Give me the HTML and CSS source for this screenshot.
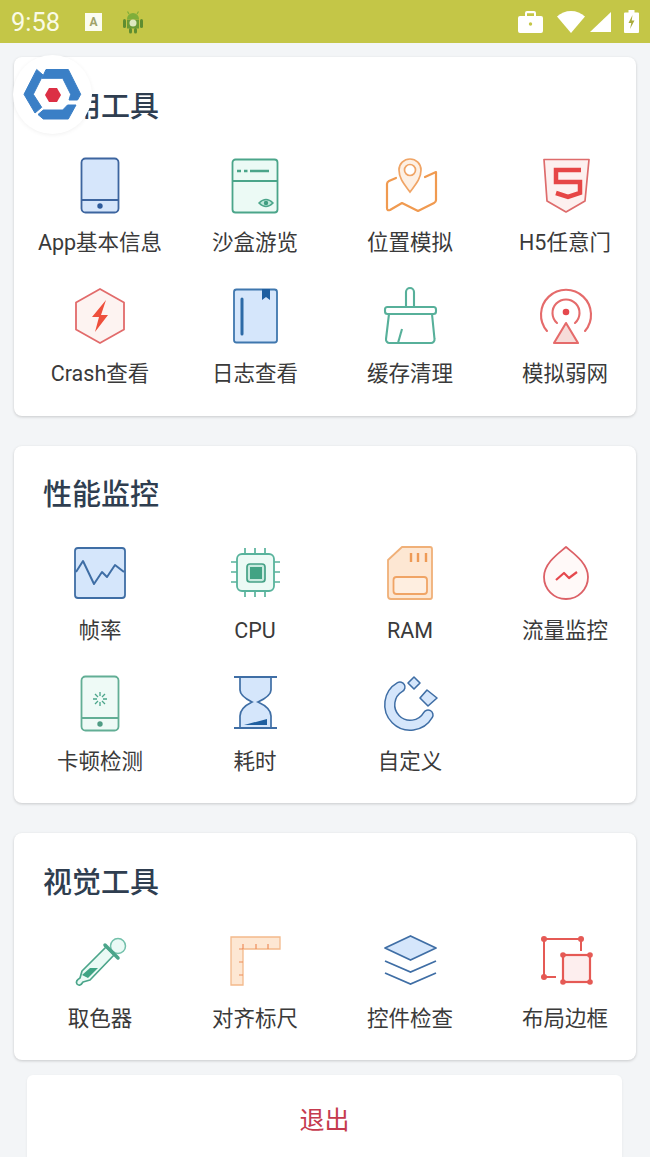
FILE: index.html
```html
<!DOCTYPE html>
<html lang="zh-CN">
  <head>
    <meta charset="UTF-8" />
    <meta name="viewport" content="width=device-width, initial-scale=1.0" />
    <title>工具面板</title>
    <link rel="stylesheet" href="styles.css">
  </head>
  <body>
    <header class="status-bar">
      <span class="time">9:58</span>
      <span class="note-a">A</span>
      <svg class="note-droid" viewBox="0 0 20 24">
        <path d="M4 9a6 6 0 0 1 12 0z" fill="#7fae3a"/>
        <path d="M6 4 4.500 1.500M14 4l1.500-2.500" stroke="#7fae3a" stroke-width="1.200"/>
        <rect x="4" y="9.500" width="12" height="9" fill="#6b9a35"/>
        <rect x="0" y="9" width="3" height="9" rx="1.500" fill="#5f8d30"/>
        <rect x="17" y="9" width="3" height="9" rx="1.500" fill="#5f8d30"/>
        <rect x="6" y="18" width="3" height="5.500" rx="1.500" fill="#5f8d30"/>
        <rect x="11" y="18" width="3" height="5.500" rx="1.500" fill="#5f8d30"/>
        <circle cx="10" cy="13" r="3.500" fill="#dfe9c0"/>
      </svg>
      <span class="status-right">
        <svg class="st-case" viewBox="0 0 25 22">
          <path d="M9 0h7a2 2 0 0 1 2 2v3h5a2 2 0 0 1 2 2v13a2 2 0 0 1-2 2H2a2 2 0 0 1-2-2V7a2 2 0 0 1 2-2h5V2a2 2 0 0 1 2-2zm0 2.200V5h7V2.200z" fill="#fff" fill-rule="evenodd"/>
          <circle cx="12.500" cy="13" r="1.700" fill="#c4c647"/>
        </svg>
        <svg class="st-wifi" viewBox="0 0 28 22"><path d="M14 22 0 5.500C3.800 2 8.700 0 14 0s10.200 2 14 5.500z" fill="#fff"/></svg>
        <svg class="st-signal" viewBox="0 0 21 20"><path d="M21 0v20H0z" fill="#fff"/></svg>
        <svg class="st-batt" viewBox="0 0 15 23">
          <path d="M4.500 0h6v2.500H14a1 1 0 0 1 1 1V22a1 1 0 0 1-1 1H1a1 1 0 0 1-1-1V3.500a1 1 0 0 1 1-1h3.500z" fill="#fff"/>
          <path d="M8.500 5 4.500 13h2.800L6 19l4.500-8.500H7.700z" fill="#a9ab3c"/>
        </svg>
      </span>
    </header>

    <main class="page">
      <div class="logo-badge">
        <svg viewBox="0 0 79 79">
          <g fill="#3a7fc6" stroke="#3a7fc6" stroke-width="1" stroke-linejoin="round">
            <path d="M23.700 14.500 11 39.300 22 58 28.700 52.300 20.300 39.300 30 20z"/>
            <path d="M33 14.500H55.300L67.700 39.300 64.500 45H56L57.700 39.300 49.700 23.300H29z"/>
            <path d="M25 59.500 30.300 64H55.300L63 50H54.500L49.700 55H30.300z"/>
          </g>
          <path d="M32 40 36 33H44L48 40 44 47H36z" fill="#dc2f45"/>
        </svg>
      </div>

      <section class="card">
        <h2 class="card-title">常用工具</h2>
        <div class="tools">
          <div class="tool">
            <svg class="tool-icon" viewBox="0 0 60 60">
              <rect x="11.500" y="3.500" width="37" height="54" rx="4" fill="#d6e6fb" stroke="#3d659f" stroke-width="1.800"/>
              <path d="M11.500 45h37" stroke="#3d659f" stroke-width="1.800"/>
              <circle cx="30" cy="51" r="2.700" fill="#2f5c9c"/>
            </svg>
            <span class="tool-name">App基本信息</span>
          </div>
          <div class="tool">
            <svg class="tool-icon" viewBox="0 0 60 60">
              <rect x="7.500" y="4.500" width="45" height="53" rx="3" fill="#ecfaf5" stroke="#4ba58a" stroke-width="1.800"/>
              <path d="M7.500 26h45" stroke="#4ba58a" stroke-width="1.800"/>
              <path d="M12 16h4M19 16h3.500M25 16h19" stroke="#4ba58a" stroke-width="2.400"/>
              <path d="M34 48q7-7 14 0-7 7-14 0z" fill="#bfe8da" stroke="#4ba58a" stroke-width="1.500"/>
              <circle cx="41" cy="48" r="2.200" fill="#3f9d80"/>
            </svg>
            <span class="tool-name">沙盒游览</span>
          </div>
          <div class="tool">
            <svg class="tool-icon" viewBox="0 0 60 60">
              <path d="M16 23 9 26Q7 27 7 29V53Q7 56 10 55L22 48 38 56 54 48Q56 47 56 45V17L45 22" fill="none" stroke="#f09a50" stroke-width="2.200" stroke-linejoin="round" stroke-linecap="round"/>
              <path d="M30 37C25 30 19 24 19 15a11 11 0 0 1 22 0C41 24 35 30 30 37z" fill="#fdf0e4" stroke="#f0a465" stroke-width="1.700"/>
              <circle cx="30" cy="15" r="5.500" fill="#fff" stroke="#f0a465" stroke-width="1.700"/>
            </svg>
            <span class="tool-name">位置模拟</span>
          </div>
          <div class="tool">
            <svg class="tool-icon" viewBox="0 0 60 60">
              <path d="M9 4.500H54L50 46 31 57 12 46z" fill="#fdf0ef" stroke="#de6c6c" stroke-width="1.700" stroke-linejoin="round"/>
              <path d="M46 15H21V27H45V38L33 42 21 38" fill="none" stroke="#e64646" stroke-width="4.500"/>
            </svg>
            <span class="tool-name">H5任意门</span>
          </div>
          <div class="tool">
            <svg class="tool-icon" viewBox="0 0 60 60">
              <path d="M30 3 54 16.500V43.500L30 57 6 43.500V16.500z" fill="#fdf3f1" stroke="#e26b6b" stroke-width="1.800" stroke-linejoin="round"/>
              <path d="M36 14 22 31H29L25 46 38 29H31z" fill="#ee4f3c"/>
            </svg>
            <span class="tool-name">Crash查看</span>
          </div>
          <div class="tool">
            <svg class="tool-icon" viewBox="0 0 60 60">
              <rect x="9" y="3.500" width="43" height="53" rx="2.500" fill="#d5e6fb" stroke="#3f77ae" stroke-width="1.800"/>
              <path d="M37 3h8V14L41 11 37 14z" fill="#1f5fa0"/>
              <path d="M17 13V48" stroke="#2d6aa6" stroke-width="3" stroke-linecap="round"/>
            </svg>
            <span class="tool-name">日志查看</span>
          </div>
          <div class="tool">
            <svg class="tool-icon" viewBox="0 0 60 60">
              <g fill="none" stroke="#57b09a" stroke-width="2.100" stroke-linejoin="round">
                <path d="M26 21V6a4 4 0 0 1 8 0V21"/>
                <rect x="5" y="21" width="51" height="7" rx="2.500"/>
                <path d="M9 28 6 53a3.500 3.500 0 0 0 3.500 4H51a3.500 3.500 0 0 0 3.500-4L52 28"/>
                <path d="M22 43 18 57"/>
              </g>
            </svg>
            <span class="tool-name">缓存清理</span>
          </div>
          <div class="tool">
            <svg class="tool-icon" viewBox="0 0 60 60">
              <g fill="none" stroke="#e56b6b" stroke-width="2.100" stroke-linecap="round">
                <path d="M12 45A25 25 0 1 1 50 45"/>
                <path d="M22 37A13.500 13.500 0 1 1 40 37"/>
              </g>
              <circle cx="31" cy="26" r="3.300" fill="#e5484d"/>
              <path d="M31 37 43 57H19z" fill="#f6dcd9" stroke="#e56b6b" stroke-width="2.100" stroke-linejoin="round"/>
            </svg>
            <span class="tool-name">模拟弱网</span>
          </div>
        </div>
      </section>

      <section class="card">
        <h2 class="card-title">性能监控</h2>
        <div class="tools">
          <div class="tool">
            <svg class="tool-icon" viewBox="0 0 60 60">
              <rect x="5" y="5" width="50" height="50" rx="3" fill="#d5e6fb" stroke="#3f6ea5" stroke-width="1.800"/>
              <path d="M6 29 13 18 24 41 32 29 37 34 45 22 54 29" fill="none" stroke="#3f6ea5" stroke-width="2" stroke-linejoin="round"/>
            </svg>
            <span class="tool-name">帧率</span>
          </div>
          <div class="tool">
            <svg class="tool-icon" viewBox="0 0 60 60">
              <path d="M20 5v6M30 5v6M40 5v6M20 48v6M30 48v6M40 48v6M6 19h6M6 29h6M6 39h6M49 19h6M49 29h6M49 39h6" stroke="#58b39c" stroke-width="1.700"/>
              <rect x="12" y="11" width="37" height="37" rx="5" fill="#ecfaf5" stroke="#58b39c" stroke-width="1.800"/>
              <rect x="22" y="21" width="18" height="18" rx="3" fill="#c9eadf" stroke="#45a186" stroke-width="1.700"/>
              <rect x="25" y="24" width="12" height="12" fill="#42a384"/>
            </svg>
            <span class="tool-name">CPU</span>
          </div>
          <div class="tool">
            <svg class="tool-icon" viewBox="0 0 60 60">
              <path d="M22 4H50a2 2 0 0 1 2 2V54a2 2 0 0 1-2 2H11a3 3 0 0 1-3-3V17z" fill="#fde7d3" stroke="#f0b078" stroke-width="1.800" stroke-linejoin="round"/>
              <rect x="13.500" y="34" width="33.500" height="17" rx="3" fill="#feeee0" stroke="#f0a465" stroke-width="1.800"/>
              <path d="M31 10v9M38 10v9M46 10v9" stroke="#ee9a55" stroke-width="2.400"/>
            </svg>
            <span class="tool-name">RAM</span>
          </div>
          <div class="tool">
            <svg class="tool-icon" viewBox="0 0 60 60">
              <path d="M31 4C38 10 53 20 53 34A22 22 0 1 1 9 34C9 20 24 10 31 4z" fill="#fff9f8" stroke="#dc6066" stroke-width="1.800" stroke-linejoin="round"/>
              <path d="M21 37 29 30 34 35 42 29" fill="none" stroke="#e5484d" stroke-width="2.200" stroke-linejoin="round"/>
            </svg>
            <span class="tool-name">流量监控</span>
          </div>
          <div class="tool">
            <svg class="tool-icon" viewBox="0 0 60 60">
              <rect x="11.500" y="2.500" width="37" height="54" rx="4" fill="#eefaf6" stroke="#62ae95" stroke-width="1.800"/>
              <path d="M11.500 44h37" stroke="#62ae95" stroke-width="1.800"/>
              <circle cx="30" cy="50" r="2.700" fill="#4f9c84"/>
              <path d="M30 18v4M30 28v4M23 25h4M33 25h4M25 20l3 3M32 27l3 3M35 20l-3 3M28 27l-3 3" stroke="#4ba58a" stroke-width="1.300"/>
            </svg>
            <span class="tool-name">卡顿检测</span>
          </div>
          <div class="tool">
            <svg class="tool-icon" viewBox="0 0 60 60">
              <path d="M15 3V16Q15 22 27 28 15 34 15 42V54H46V42Q46 34 33 28 46 22 46 16V3z" fill="#d5e6fb" stroke="#3f6ea5" stroke-width="1.700"/>
              <path d="M9 3H52M9 54H52" stroke="#3f6ea5" stroke-width="2.200"/>
              <path d="M19 51 42 45V51z" fill="#1f5fa0"/>
            </svg>
            <span class="tool-name">耗时</span>
          </div>
          <div class="tool">
            <svg class="tool-icon" viewBox="0 0 60 60">
              <path d="M20 13A20.500 20.500 0 1 0 48 41" fill="none" stroke="#3f6ea5" stroke-width="11.500" stroke-linecap="round"/>
              <path d="M20 13A20.500 20.500 0 1 0 48 41" fill="none" stroke="#d5e6fb" stroke-width="8.500" stroke-linecap="round"/>
              <path d="M34 3 40 9 34 15 28 9z" fill="#d5e6fb" stroke="#3f6ea5" stroke-width="1.600" stroke-linejoin="round"/>
              <path d="M47 16 57 24 48 32 40 24z" fill="#d5e6fb" stroke="#3f6ea5" stroke-width="1.600" stroke-linejoin="round"/>
            </svg>
            <span class="tool-name">自定义</span>
          </div>
        </div>
      </section>

      <section class="card">
        <h2 class="card-title">视觉工具</h2>
        <div class="tools">
          <div class="tool">
            <svg class="tool-icon" viewBox="0 0 60 60">
              <path d="M36 16 12 40 10 47Q5 50 7 53 10 56 13 51L20 49 44 24z" fill="#eafaf5" stroke="#4ba58a" stroke-width="1.700" stroke-linejoin="round"/>
              <path d="M20 37H28L18 47 12 44z" fill="#3ea484"/>
              <circle cx="48" cy="15" r="7.500" fill="#eafaf5" stroke="#72c0aa" stroke-width="1.500"/>
              <path d="M35 14 48 27" stroke="#4ba58a" stroke-width="3.500" stroke-linecap="round"/>
            </svg>
            <span class="tool-name">取色器</span>
          </div>
          <div class="tool">
            <svg class="tool-icon" viewBox="0 0 60 60">
              <path d="M6 6H55V18H18V54H6z" fill="#fde7d3" stroke="#f3b98b" stroke-width="1.300"/>
              <path d="M18 13v5M31 13v5M43 13v5M14 18h4M14 31h4M14 44h4" stroke="#ee8d5a" stroke-width="1.200"/>
            </svg>
            <span class="tool-name">对齐标尺</span>
          </div>
          <div class="tool">
            <svg class="tool-icon" viewBox="0 0 60 60">
              <path d="M30.500 5 56 17 30.500 29 5 17z" fill="#d5e6fb" stroke="#3f6ea5" stroke-width="1.800" stroke-linejoin="round"/>
              <path d="M5 30 30.500 41 56 30M5 42 30.500 53 56 42" fill="none" stroke="#3f6ea5" stroke-width="1.800"/>
            </svg>
            <span class="tool-name">控件检查</span>
          </div>
          <div class="tool">
            <svg class="tool-icon" viewBox="0 0 60 60">
              <path d="M46 20V8H9V46H21" fill="none" stroke="#e55a55" stroke-width="2"/>
              <rect x="28" y="24" width="27" height="27" fill="#fdeeee" stroke="#e55a55" stroke-width="2.200"/>
              <g fill="#e55a55">
                <circle cx="9" cy="8" r="3"/>
                <circle cx="46" cy="8" r="3"/>
                <circle cx="9" cy="46" r="3"/>
                <circle cx="28" cy="24" r="2.800"/>
                <circle cx="55" cy="24" r="2.800"/>
                <circle cx="28" cy="51" r="2.800"/>
                <circle cx="55" cy="51" r="2.800"/>
              </g>
            </svg>
            <span class="tool-name">布局边框</span>
          </div>
        </div>
      </section>

      <button class="logout" type="button">退出</button>
    </main>
  </body>
</html>
```

FILE: styles.css
```css
html,
body {
  height: 1157px;
  overflow: hidden;
}

body {
  margin: 0;
  background-color: #f3f5f7;
  color: #3a3a3a;
  font-family: Roboto, "Noto Sans CJK SC", sans-serif;
}

.status-bar {
  height: 43px;
  background-color: #c4c647;
  display: flex;
  align-items: center;
  padding: 0 11px;
  box-sizing: border-box;
}

.time {
  color: #fafbe6;
  font-size: 25.5px;
  width: 74px;
}

.note-a {
  width: 17px;
  height: 18px;
  background-color: #fbfcf0;
  color: #a0a268;
  font-size: 12px;
  font-weight: 700;
  line-height: 18px;
  text-align: center;
}

.note-droid {
  width: 20px;
  height: 24px;
  margin-left: 21px;
}

.status-right {
  margin-left: auto;
  display: flex;
  align-items: center;
}

.st-case {
  width: 25px;
  height: 22px;
}

.st-wifi {
  width: 28px;
  height: 22px;
  margin-left: 14px;
}

.st-signal {
  width: 21px;
  height: 20px;
  margin-left: 5px;
}

.st-batt {
  width: 15px;
  height: 23px;
  margin-left: 13px;
}

.page {
  position: relative;
  padding: 14px 14px 0;
}

.logo-badge {
  position: absolute;
  left: 13px;
  top: 12px;
  width: 79px;
  height: 79px;
  border-radius: 50%;
  background-color: white;
  box-shadow: 0 1px 4px rgba(0, 0, 0, 0.06);
}

.logo-badge svg {
  display: block;
  width: 79px;
  height: 79px;
}

.card {
  background-color: white;
  border-radius: 8px;
  box-shadow: 0 1px 3px rgba(0, 0, 0, 0.18);
  padding: 30px 6px 26px 21px;
  margin-bottom: 30px;
}

.card:nth-of-type(1) {
  padding-bottom: 27px;
}

.card:nth-of-type(2) {
  padding-top: 29px;
}

.card-title {
  margin: 0 0 28px 8px;
  color: #2f3e50;
  font-size: 29px;
  font-weight: 500;
  line-height: 40px;
}

.tools {
  display: grid;
  grid-template-columns: repeat(4, 130px);
  column-gap: 25px;
  row-gap: 28px;
}

.tool {
  display: flex;
  flex-direction: column;
  align-items: center;
}

.tool-icon {
  display: block;
  width: 60px;
  height: 60px;
}

.tool-name {
  margin-top: 13px;
  font-size: 21.5px;
  line-height: 30px;
  white-space: nowrap;
}

.logout {
  display: block;
  box-sizing: border-box;
  width: 595px;
  height: 110px;
  margin: -15px 0 0 13px;
  padding: 0 0 24px;
  border: none;
  border-radius: 6px;
  background-color: white;
  box-shadow: 0 1px 3px rgba(0, 0, 0, 0.06);
  color: #c53a4e;
  font-family: inherit;
  font-size: 25px;
}
```
